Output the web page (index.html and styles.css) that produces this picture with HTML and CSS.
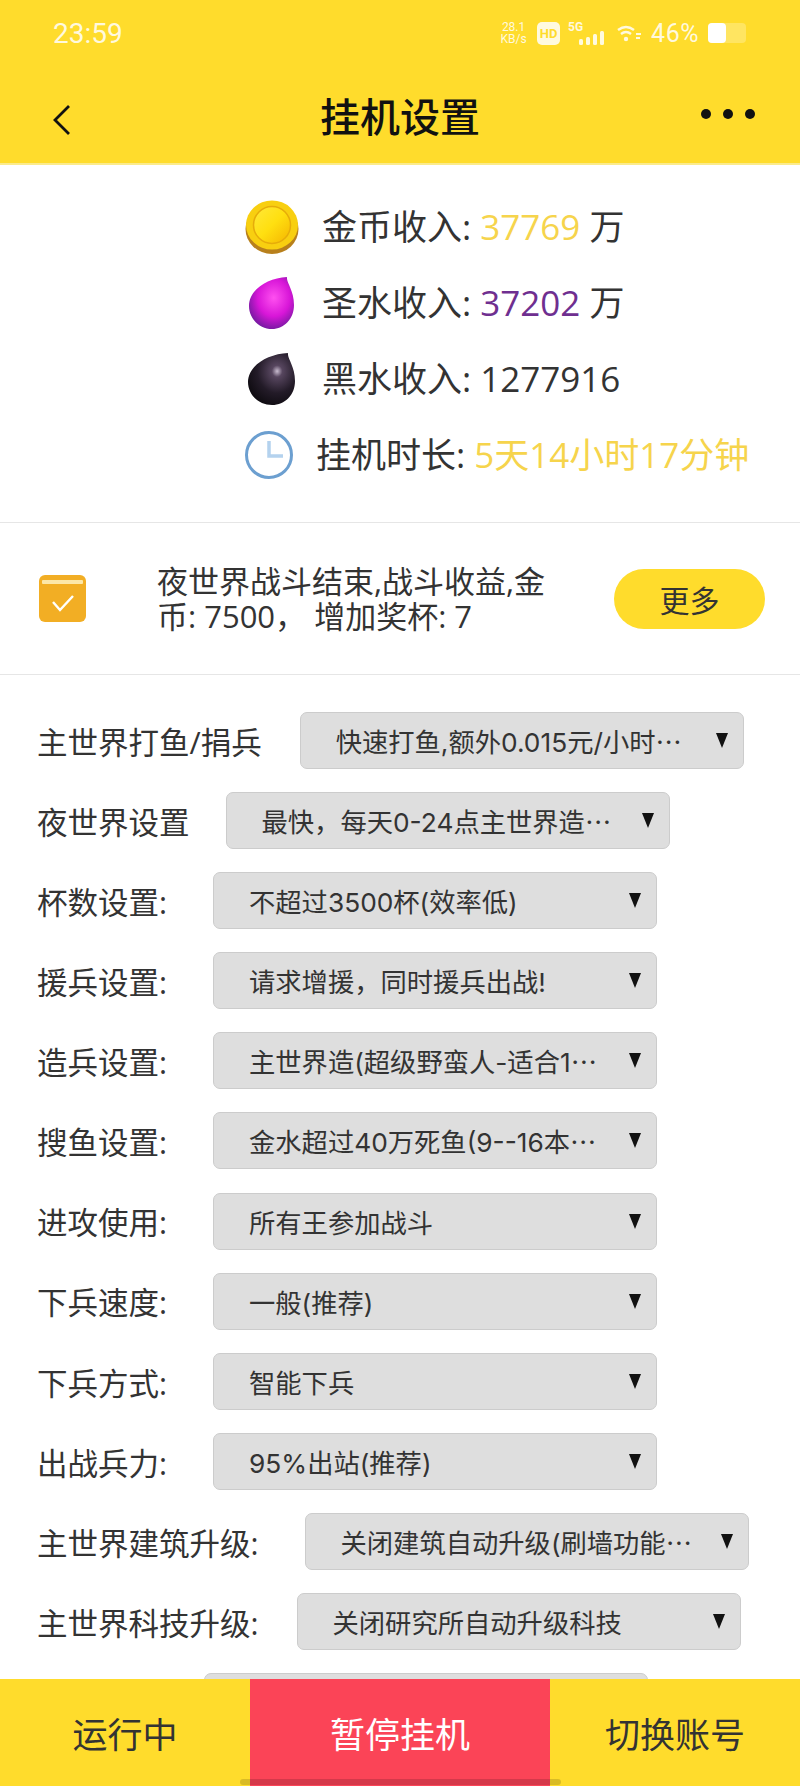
FILE: index.html
```html
<!DOCTYPE html>
<html lang="zh-CN">

<head>
    <meta charset="UTF-8">
    <meta name="viewport" content="width=device-width, initial-scale=1.0">
    <title>挂机设置</title>
    <link rel="stylesheet" href="styles.css">
</head>

<body>
    <div class="page">
        <header class="header">
            <div class="status-bar">
                <span class="status-time">23:59</span>
                <div class="status-icons">
                    <span class="net-speed">28.1<br>KB/s</span>
                    <span class="hd-badge">HD</span>
                    <span class="signal">
                        <span class="signal-label">5G</span>
                        <svg class="signal-bars" width="26" height="14" viewBox="0 0 26 14">
                            <rect x="1" y="8" width="4" height="6" rx="1.5" />
                            <rect x="8" y="6" width="4" height="8" rx="1.5" />
                            <rect x="15" y="3" width="4" height="11" rx="1.5" />
                            <rect x="22" y="0" width="4" height="14" rx="1.5" />
                        </svg>
                    </span>
                    <svg class="wifi" width="24" height="17" viewBox="0 0 24 17">
                        <path d="M1 5 Q9 -1 17 5 M4 9 Q9 5 14 9" fill="none" stroke="#fff" stroke-width="2.4" />
                        <circle cx="9" cy="14" r="2.2" fill="#fff" />
                        <rect x="19" y="8" width="5" height="2" fill="#fff" />
                        <rect x="19" y="12" width="4" height="2" fill="#fff" />
                    </svg>
                    <span class="battery-text">46%</span>
                    <span class="battery"><span class="battery-level"></span></span>
                </div>
            </div>
            <div class="title-bar">
                <svg class="back-icon" width="20" height="32" viewBox="0 0 20 32">
                    <path d="M17 2 L3 16 L17 30" fill="none" stroke="#111" stroke-width="2.8" />
                </svg>
                <h1 class="title">挂机设置</h1>
                <div class="more-dots"><i></i><i></i><i></i></div>
            </div>
        </header>

        <main class="main">
            <section class="stats">
                <div class="stat-row">
                    <svg class="stat-icon" width="54" height="54" viewBox="0 0 54 54">
                        <defs>
                            <linearGradient id="coinFace" x1="0" y1="0" x2="1" y2="1">
                                <stop offset="0" stop-color="#ffe93a" />
                                <stop offset="0.5" stop-color="#ffdf10" />
                                <stop offset="1" stop-color="#f4b400" />
                            </linearGradient>
                        </defs>
                        <ellipse cx="27" cy="29" rx="26.5" ry="25" fill="#b8801c" />
                        <ellipse cx="27" cy="25" rx="26" ry="24.5" fill="#f8cf10" />
                        <circle cx="27" cy="25" r="18.5" fill="url(#coinFace)" stroke="#e6ac0a" stroke-width="1.5" />
                    </svg>
                    <span class="stat-text">金币收入: <span class="value-gold">37769</span> 万</span>
                </div>
                <div class="stat-row">
                    <svg class="stat-icon" width="54" height="54" viewBox="0 0 54 54">
                        <defs>
                            <radialGradient id="purpleDrop" cx="0.55" cy="0.4" r="0.65">
                                <stop offset="0" stop-color="#ff50f0" />
                                <stop offset="0.55" stop-color="#d816d8" />
                                <stop offset="1" stop-color="#6a1a9a" />
                            </radialGradient>
                        </defs>
                        <path d="M42 1 C41 6 49 14 49 29 C49 43 39 53 27 53 C15 53 4 43 4 30 C4 14 22 2 42 1 Z" fill="url(#purpleDrop)" />
                    </svg>
                    <span class="stat-text">圣水收入: <span class="value-purple">37202</span> 万</span>
                </div>
                <div class="stat-row">
                    <svg class="stat-icon" width="54" height="54" viewBox="0 0 54 54">
                        <defs>
                            <radialGradient id="darkDrop" cx="0.62" cy="0.35" r="0.7">
                                <stop offset="0" stop-color="#c9bcd0" />
                                <stop offset="0.16" stop-color="#57465f" />
                                <stop offset="0.6" stop-color="#231b28" />
                                <stop offset="1" stop-color="#0e0b10" />
                            </radialGradient>
                        </defs>
                        <path d="M43 1 C42 6 50 14 50 29 C50 43 40 53 27 53 C14 53 3 43 3 30 C3 14 22 2 43 1 Z" fill="url(#darkDrop)" />
                    </svg>
                    <span class="stat-text">黑水收入: 1277916</span>
                </div>
                <div class="stat-row">
                    <svg class="stat-icon-small" width="48" height="50" viewBox="0 0 48 50">
                        <circle cx="24" cy="25" r="22.5" fill="#fff" stroke="#6c9fd0" stroke-width="3" />
                        <path d="M24 11 V26 H38" fill="none" stroke="#b4d2ee" stroke-width="3.5" />
                    </svg>
                    <span class="stat-text">挂机时长: <span class="value-gold">5天14小时17分钟</span></span>
                </div>
            </section>

            <section class="notice">
                <svg class="notice-icon" width="47" height="47" viewBox="0 0 47 47">
                    <rect width="47" height="47" rx="6" fill="#f2ae24" />
                    <rect x="3" y="5" width="41" height="4" rx="1" fill="#fce7a8" />
                    <path d="M14 27 L21 35 L34 21" fill="none" stroke="#fff" stroke-width="2.4" />
                </svg>
                <p class="notice-text">夜世界战斗结束,战斗收益,金币: 7500， 增加奖杯: 7</p>
                <button class="more-button">更多</button>
            </section>

            <section class="settings">
                <div class="setting-row">
                    <label class="setting-label tight">主世界打鱼/捐兵</label>
                    <div class="select"><span class="select-text">快速打鱼,额外0.015元/小时<span class="dots">…</span></span><i class="select-arrow"></i></div>
                </div>
                <div class="setting-row">
                    <label class="setting-label no-colon">夜世界设置</label>
                    <div class="select"><span class="select-text">最快，每天0-24点主世界造<span class="dots">…</span></span><i class="select-arrow"></i></div>
                </div>
                <div class="setting-row">
                    <label class="setting-label">杯数设置:</label>
                    <div class="select"><span class="select-text">不超过3500杯(效率低)</span><i class="select-arrow"></i></div>
                </div>
                <div class="setting-row">
                    <label class="setting-label">援兵设置:</label>
                    <div class="select"><span class="select-text">请求增援，同时援兵出战!</span><i class="select-arrow"></i></div>
                </div>
                <div class="setting-row">
                    <label class="setting-label">造兵设置:</label>
                    <div class="select"><span class="select-text">主世界造(超级野蛮人-适合1<span class="dots">…</span></span><i class="select-arrow"></i></div>
                </div>
                <div class="setting-row">
                    <label class="setting-label">搜鱼设置:</label>
                    <div class="select"><span class="select-text">金水超过40万死鱼(9--16本<span class="dots">…</span></span><i class="select-arrow"></i></div>
                </div>
                <div class="setting-row">
                    <label class="setting-label">进攻使用:</label>
                    <div class="select"><span class="select-text">所有王参加战斗</span><i class="select-arrow"></i></div>
                </div>
                <div class="setting-row">
                    <label class="setting-label">下兵速度:</label>
                    <div class="select"><span class="select-text">一般(推荐)</span><i class="select-arrow"></i></div>
                </div>
                <div class="setting-row">
                    <label class="setting-label">下兵方式:</label>
                    <div class="select"><span class="select-text">智能下兵</span><i class="select-arrow"></i></div>
                </div>
                <div class="setting-row">
                    <label class="setting-label">出战兵力:</label>
                    <div class="select"><span class="select-text">95%出站(推荐)</span><i class="select-arrow"></i></div>
                </div>
                <div class="setting-row">
                    <label class="setting-label">主世界建筑升级:</label>
                    <div class="select"><span class="select-text">关闭建筑自动升级(刷墙功能<span class="dots">…</span></span><i class="select-arrow"></i></div>
                </div>
                <div class="setting-row">
                    <label class="setting-label tight">主世界科技升级:</label>
                    <div class="select"><span class="select-text">关闭研究所自动升级科技</span><i class="select-arrow"></i></div>
                </div>
                <div class="setting-row">
                    <span class="setting-label-cut"></span>
                    <div class="select"></div>
                </div>
            </section>
        </main>

        <footer class="footer">
            <div class="footer-item">运行中</div>
            <div class="footer-item footer-pause">暂停挂机</div>
            <div class="footer-item">切换账号</div>
            <div class="home-bar"></div>
        </footer>
    </div>
</body>

</html>
```

FILE: styles.css
```css
* {
    box-sizing: border-box;
}

body {
    font-family: "Open Sans", "Noto Sans CJK SC", sans-serif;
    background-color: #ffffff;
    color: #333333;
    margin: 0;
}

.page {
    display: flex;
    flex-direction: column;
    height: 1786px;
    overflow: hidden;
}

/* top bar */
.header {
    background-color: #ffdc2c;
    height: 165px;
    flex-shrink: 0;
    border-bottom: 2px solid #fbeb8c;
}

.status-bar {
    display: flex;
    justify-content: space-between;
    align-items: center;
    height: 66px;
    padding: 0 54px 0 53px;
    color: rgba(255, 255, 255, 0.85);
}

.status-time {
    font-family: "Roboto", sans-serif;
    font-size: 28px;
}

.status-icons {
    display: flex;
    align-items: center;
}

.net-speed {
    font-family: "Roboto", sans-serif;
    font-size: 12px;
    line-height: 12px;
    text-align: center;
    width: 27px;
    margin-right: 10px;
}

.hd-badge {
    font-family: "Roboto", sans-serif;
    font-weight: 700;
    font-size: 13px;
    line-height: 23px;
    width: 23px;
    text-align: center;
    color: #ffdc2c;
    background-color: rgba(255, 255, 255, 0.85);
    border-radius: 5px;
    margin-right: 8px;
}

.signal {
    position: relative;
    width: 36px;
    height: 24px;
    margin-right: 13px;
}

.signal-label {
    position: absolute;
    left: 0;
    top: 0;
    font-family: "Roboto", sans-serif;
    font-weight: 700;
    font-size: 12px;
    line-height: 12px;
}

.signal-bars {
    position: absolute;
    right: 0;
    bottom: 0;
    fill: rgba(255, 255, 255, 0.85);
}

.wifi {
    opacity: 0.85;
    margin-right: 10px;
}

.battery-text {
    font-family: "Roboto", sans-serif;
    font-size: 25px;
    letter-spacing: 0.5px;
    margin-right: 9px;
}

.battery {
    display: block;
    width: 38px;
    height: 20px;
    border-radius: 4px;
    background-color: rgba(255, 255, 255, 0.25);
}

.battery-level {
    display: block;
    width: 18px;
    height: 20px;
    border-radius: 4px;
    background-color: #ffffff;
}

.title-bar {
    display: grid;
    grid-template-columns: 1fr auto 1fr;
    align-items: center;
    height: 97px;
    padding: 0 45px;
}

.back-icon {
    margin: 11px 0 0 7px;
}

.title {
    margin: 0;
    font-size: 40px;
    font-weight: 500;
    color: #111111;
}

.more-dots {
    display: flex;
    justify-self: end;
    gap: 12px;
    margin-top: -2px;
}

.more-dots i {
    display: block;
    width: 10px;
    height: 10px;
    border-radius: 50%;
    background-color: #111111;
}

/* content */
.main {
    flex: 1;
    min-height: 0;
    overflow: hidden;
}

.stats {
    padding: 24px 0 29px 245px;
    border-bottom: 1px solid #e6e6e6;
}

.stat-row {
    display: flex;
    align-items: center;
    gap: 23px;
    height: 76px;
}

.stat-icon,
.stat-icon-small {
    flex-shrink: 0;
}

.stat-text {
    font-size: 35px;
    line-height: 1;
    margin-top: -1px;
    white-space: nowrap;
}

.value-gold {
    color: #f6d44c;
}

.value-purple {
    color: #6f2f90;
}

.notice {
    display: flex;
    align-items: center;
    height: 152px;
    padding: 0 35px 0 39px;
    border-bottom: 1px solid #e6e6e6;
}

.notice-icon {
    flex-shrink: 0;
}

.notice-text {
    width: 400px;
    margin: 0 0 0 71px;
    font-size: 31px;
    line-height: 35px;
}

.more-button {
    width: 151px;
    height: 60px;
    margin-left: auto;
    border: none;
    border-radius: 30px;
    background-color: #ffdc2c;
    color: #333333;
    font-family: inherit;
    font-size: 30px;
}

.settings {
    display: flex;
    flex-direction: column;
    gap: 23.1px;
    padding: 37px 0 0 37px;
}

.setting-row {
    display: flex;
    align-items: center;
    height: 57px;
    flex-shrink: 0;
}

.setting-label {
    font-size: 30.5px;
    line-height: 1;
    margin-right: 46px;
    margin-top: 3px;
    white-space: nowrap;
}

.setting-label.no-colon {
    margin-right: 36px;
}

.setting-label.tight {
    margin-right: 38px;
}

.setting-label-cut {
    width: 167px;
}

.select {
    display: flex;
    justify-content: space-between;
    align-items: center;
    width: 444px;
    height: 57px;
    padding: 0 15px 0 35px;
    background-color: #dedede;
    border: 1px solid #cccccc;
    border-radius: 7px;
}

.select-text {
    font-family: "Inter", "Noto Sans CJK SC", sans-serif;
    font-size: 26.3px;
    white-space: nowrap;
}

.dots {
    font-family: "Noto Sans CJK SC", sans-serif;
}

.select-arrow {
    display: block;
    margin-left: auto;
    border-left: 6.5px solid transparent;
    border-right: 6.5px solid transparent;
    border-top: 15px solid #111111;
}

/* bottom bar */
.footer {
    position: relative;
    display: flex;
    height: 107px;
    flex-shrink: 0;
    background-color: #ffdc2c;
}

.footer-item {
    display: flex;
    justify-content: center;
    align-items: center;
    width: 250px;
    font-size: 35px;
}

.footer-pause {
    width: 300px;
    background-color: #fb4457;
    color: #ffffff;
}

.home-bar {
    position: absolute;
    left: 240px;
    bottom: 1px;
    width: 321px;
    height: 6px;
    border-radius: 3px;
    background-color: rgba(0, 0, 0, 0.15);
}
```
